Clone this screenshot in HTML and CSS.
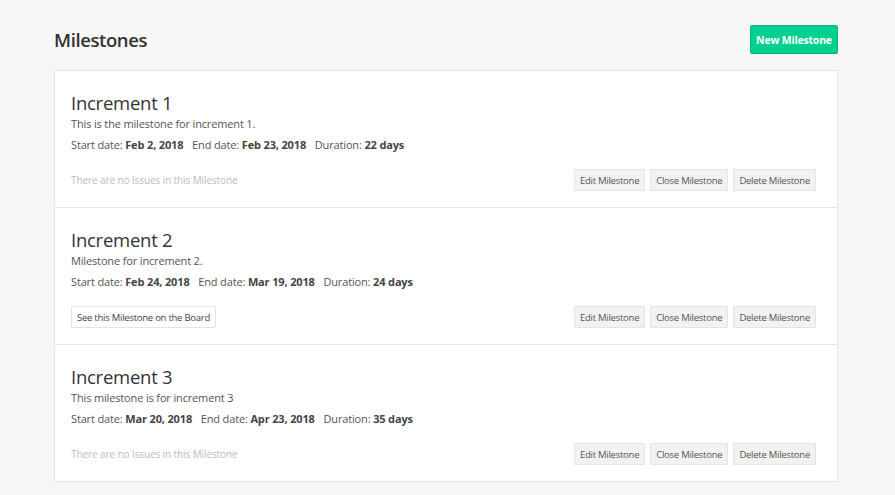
FILE: index.html
```html
<!DOCTYPE html>
<html>
<head>
<meta charset="utf-8">
<link rel="stylesheet" href="styles.css">
</head>
<body>
<div class="page">
  <div class="header">
    <h1 class="title">Milestones</h1>
    <button class="btn-primary">New Milestone</button>
  </div>
  <div class="list">
    <div class="item">
      <h2 class="item-title">Increment 1</h2>
      <p class="desc">This is the milestone for increment 1.</p>
      <p class="dates">Start date: <b>Feb 2, 2018</b> <span class="sep"></span>End date: <b>Feb 23, 2018</b> <span class="sep"></span>Duration: <b>22 days</b></p>
      <div class="footer">
        <span class="empty">There are no Issues in this Milestone</span>
        <div class="actions">
          <button class="btn">Edit Milestone</button>
          <button class="btn">Close Milestone</button>
          <button class="btn">Delete Milestone</button>
        </div>
      </div>
    </div>
    <div class="item">
      <h2 class="item-title">Increment 2</h2>
      <p class="desc">Milestone for increment 2.</p>
      <p class="dates">Start date: <b>Feb 24, 2018</b> <span class="sep"></span>End date: <b>Mar 19, 2018</b> <span class="sep"></span>Duration: <b>24 days</b></p>
      <div class="footer">
        <button class="btn-outline">See this Milestone on the Board</button>
        <div class="actions">
          <button class="btn">Edit Milestone</button>
          <button class="btn">Close Milestone</button>
          <button class="btn">Delete Milestone</button>
        </div>
      </div>
    </div>
    <div class="item">
      <h2 class="item-title">Increment 3</h2>
      <p class="desc">This milestone is for increment 3</p>
      <p class="dates">Start date: <b>Mar 20, 2018</b> <span class="sep"></span>End date: <b>Apr 23, 2018</b> <span class="sep"></span>Duration: <b>35 days</b></p>
      <div class="footer">
        <span class="empty">There are no Issues in this Milestone</span>
        <div class="actions">
          <button class="btn">Edit Milestone</button>
          <button class="btn">Close Milestone</button>
          <button class="btn">Delete Milestone</button>
        </div>
      </div>
    </div>
  </div>
</div>
</body>
</html>
```
FILE: styles.css
```css
* { box-sizing: border-box; }
html, body { margin: 0; padding: 0; }
body {
  background: #f7f7f7;
  font-family: "Open Sans", "Noto Sans", sans-serif;
  color: #333;
}
.page {
  width: 784px;
  margin-left: 54px;
  padding-top: 25px;
}
.header {
  display: flex;
  justify-content: space-between;
  align-items: center;
  height: 29px;
  margin-bottom: 16px;
}
.title {
  margin: 0;
  font-size: 18.5px;
  font-weight: 600;
  color: #333;
  letter-spacing: -0.4px;
}
.btn-primary {
  height: 29px;
  width: 88px;
  padding: 0;
  background: #00d08f;
  border: 1px solid #10b37f;
  border-radius: 2px;
  color: #fff;
  font-family: inherit;
  font-size: 10.5px;
  font-weight: 700;
  letter-spacing: -0.2px;
}
.list {
  background: #fff;
  border: 1px solid #e6e6e6;
}
.item {
  height: 137px;
  padding: 20px 21px 0 16px;
  border-bottom: 1px solid #e6e6e6;
}
.item:last-child { border-bottom: 0; height: 136px; }
.item-title {
  margin: 0;
  font-size: 18.5px;
  font-weight: 500;
  line-height: 24px;
  color: #333;
  letter-spacing: -0.25px;
}
.desc {
  margin: 0;
  font-size: 11px;
  line-height: 17px;
  color: #555;
  letter-spacing: -0.15px;
}
.dates {
  margin: 4px 0 0;
  font-size: 11px;
  line-height: 17px;
  color: #555;
  letter-spacing: -0.15px;
}
.dates b { font-weight: 700; color: #444; }
.sep { display: inline-block; width: 6px; }
.footer {
  margin-top: 16px;
  display: flex;
  justify-content: space-between;
  align-items: center;
  height: 22px;
}
.empty {
  font-size: 10px;
  color: #bbb;
  letter-spacing: -0.1px;
}
.actions { display: flex; gap: 5px; }
.btn, .btn-outline {
  height: 22px;
  padding: 0 5px;
  background: #f2f2f2;
  border: 1px solid #e4e4e4;
  border-radius: 1px;
  font-family: inherit;
  font-size: 9.5px;
  color: #555;
  letter-spacing: -0.25px;
}
.btn-outline {
  background: #fff;
  color: #444;
}
```
